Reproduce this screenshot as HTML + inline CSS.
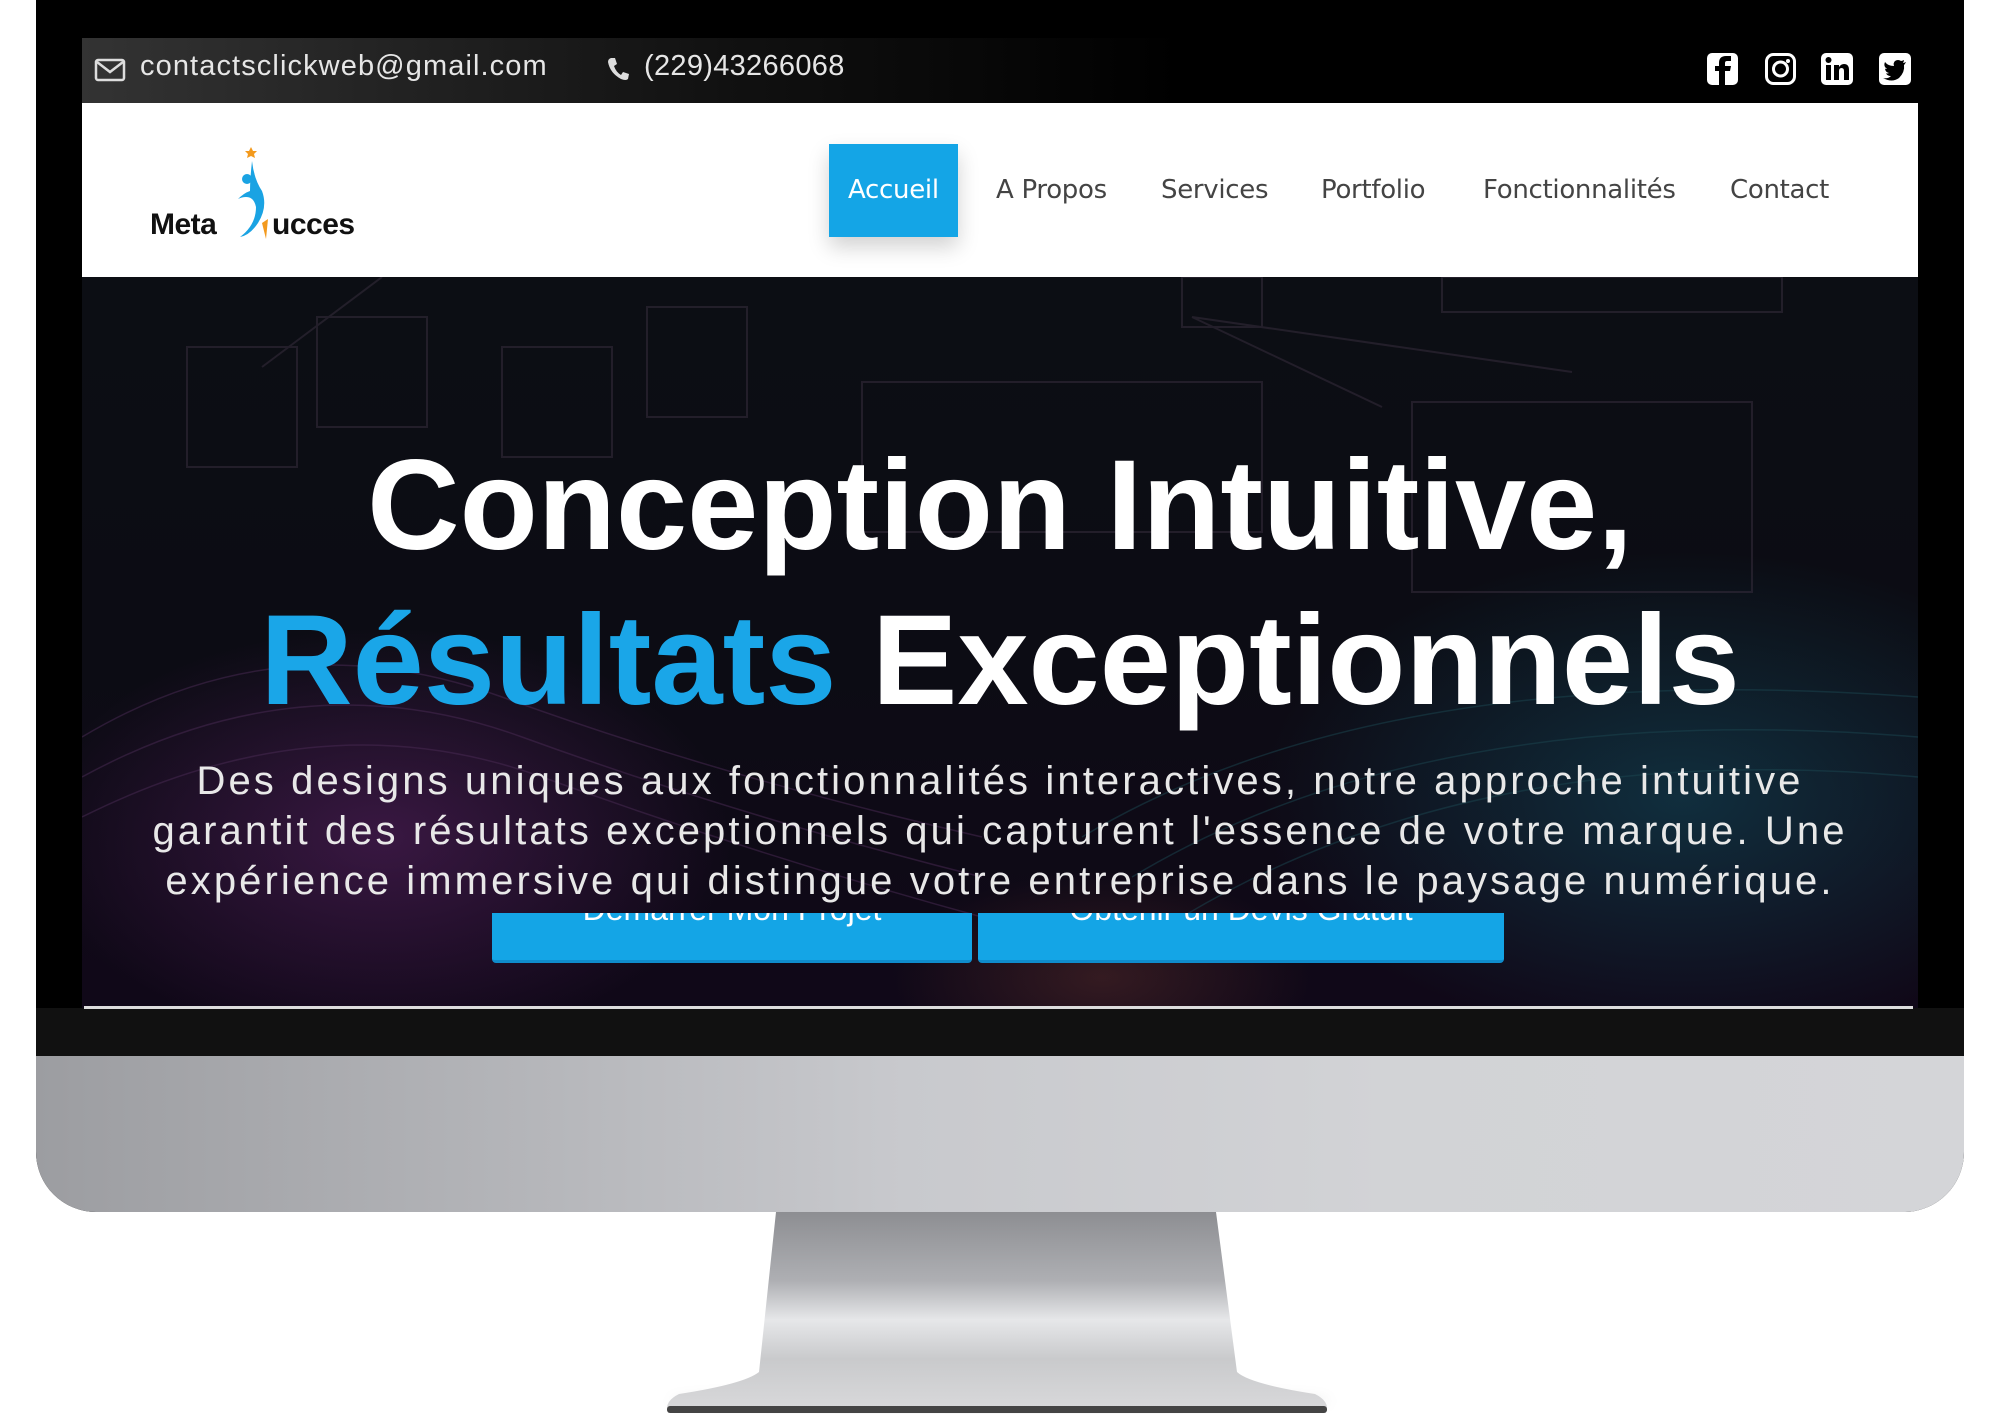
<!DOCTYPE html>
<html><head><meta charset="utf-8"><style>
*{margin:0;padding:0;box-sizing:border-box}
body{width:2000px;height:1414px;background:#fff;position:relative;overflow:hidden;font-family:"Liberation Sans",sans-serif}
.abs{position:absolute}
#body{left:36px;top:-60px;width:1928px;height:1272px;border-radius:60px;background:#000;overflow:hidden}
#chin{left:0;top:1116px;width:1928px;height:156px;background:linear-gradient(90deg,#9c9da1 0%,#b4b5b9 25%,#c8c9cd 45%,#d2d3d6 70%,#d4d5d8 100%)}
#bez{left:0;top:1068px;width:1928px;height:48px;background:#111}
#top{left:82px;top:38px;width:1836px;height:65px;background:linear-gradient(90deg,#333 0%,#111 35%,#000 60%,#000 100%);color:#e6e6e6;font-size:29px}
#nav{left:82px;top:103px;width:1836px;height:174px;background:#fff}
#hero{left:82px;top:277px;width:1836px;height:731px;overflow:hidden;background:
radial-gradient(ellipse 500px 300px at 300px 560px,rgba(110,40,120,.45),transparent 70%),
radial-gradient(ellipse 600px 350px at 1600px 520px,rgba(20,90,110,.45),transparent 70%),
radial-gradient(ellipse 300px 150px at 1020px 700px,rgba(120,60,50,.35),transparent 70%),
linear-gradient(180deg,#0c0e14 0%,#0c0c14 50%,#100818 100%)}
.nv{position:absolute;top:174px;font-size:26px;color:#444;font-family:"DejaVu Sans","Liberation Sans",sans-serif;transform:translateY(-50%);letter-spacing:-0.3px}
h1{position:absolute;width:2000px;left:0;text-align:center;color:#fff;font-weight:bold;font-size:128px;letter-spacing:0px;font-family:"Liberation Sans",sans-serif}
p.d{position:absolute;left:0;width:2000px;text-align:center;color:#e8e8e8;font-size:40px;line-height:50px;letter-spacing:3.1px}
.btn{position:absolute;top:913px;height:50px;background:#14a5e6;color:#fff;font-size:32px;text-align:center;overflow:hidden;border-radius:0 0 4px 4px;border-bottom:3px solid #0f8ccc}
.btn span{position:relative;top:-22px}
</style></head><body>
<div id="body" class="abs">
 <div id="bez" class="abs"></div>
 <div id="chin" class="abs"></div>
</div>
<div id="top" class="abs">
 <svg class="abs" style="left:12px;top:20px" width="32" height="24" viewBox="0 0 32 24"><rect x="2" y="2" width="28" height="20" rx="2" fill="none" stroke="#ddd" stroke-width="2.5"/><path d="M3 4 L16 14 L29 4" fill="none" stroke="#ddd" stroke-width="2.5"/></svg>
 <div class="abs" style="left:58px;top:12px;letter-spacing:1.1px">contactsclickweb@gmail.com</div>
 <svg class="abs" style="left:524px;top:18px" width="24" height="26" viewBox="0 0 24 26"><path d="M5 2 L9 2 L11 8 L8 10 Q10 16 15 19 L17 16 L23 18 L22 23 Q20 25 15 23 Q4 17 2 6 Q2 3 5 2Z" fill="#ddd"/></svg>
 <div class="abs" style="left:562px;top:12px;letter-spacing:0.3px">(229)43266068</div>
 <svg class="abs" style="left:1625px;top:15px" width="210" height="33" viewBox="0 0 210 33">
  <rect x="0" y="0" width="31" height="32" rx="5" fill="#fff"/><path d="M18 32 V18 H23 L24 13 H18 V10 Q18 8 20 8 H24 V3 H19 Q12 3 12 10 V13 H8 V18 H12 V32Z" fill="#000"/>
  <rect x="59.5" y="1.5" width="28" height="29" rx="7" fill="none" stroke="#fff" stroke-width="3"/><circle cx="73.5" cy="16" r="7" fill="none" stroke="#fff" stroke-width="3"/><circle cx="81" cy="8" r="2" fill="#fff"/>
  <rect x="114" y="0" width="32" height="32" rx="5" fill="#fff"/><rect x="119" y="12" width="5" height="15" fill="#000"/><circle cx="121.5" cy="7" r="3" fill="#000"/><path d="M127 12 H132 V14 Q134 11 137 11 Q142 11 142 17 V27 H137 V18 Q137 15 134.5 15 Q132 15 132 18 V27 H127Z" fill="#000"/>
  <rect x="172" y="0" width="32" height="32" rx="5" fill="#fff"/><path d="M199 9 Q197 10 196 10 Q197 8 197 7 Q195 8 194 8 Q191 6 188 8 Q186 10 187 13 Q181 13 178 9 Q176 13 180 16 Q178 16 178 15 Q178 19 182 20 Q180 21 179 20 Q180 23 184 23 Q181 26 176 25 Q185 30 192 25 Q198 19 197 12 Q198 11 199 9Z" fill="#000"/>
 </svg>
</div>
<div id="nav" class="abs">
 <div class="abs" style="left:68px;top:105px;font-size:30px;font-weight:bold;color:#111;letter-spacing:-0.5px">Meta</div>
 <svg class="abs" style="left:140px;top:40px" width="60" height="100" viewBox="0 0 60 100"><path d="M29 4 L31 8 L35 8 L32 11 L33 15 L29 13 L25 15 L26 11 L23 8 L27 8Z" fill="#f39a1e"/><circle cx="25" cy="36" r="5" fill="#1aa3e3"/><path d="M30 18 Q32 36 40 48 Q46 64 36 80 Q28 92 18 94 Q34 82 34 64 Q32 54 24 54 Q20 54 16 56 Q22 50 28 48 Q28 36 30 18Z" fill="#1aa3e3"/><path d="M40 80 L46 76 L44 96 Z" fill="#f39a1e"/></svg>
 <div class="abs" style="left:190px;top:105px;font-size:30px;font-weight:bold;color:#111;letter-spacing:-0.5px">ucces</div>
 <div class="abs" style="left:747px;top:41px;width:129px;height:93px;background:#14a5e6;box-shadow:0 10px 20px rgba(0,0,0,.18)"></div>
 <div class="nv" style="left:766px;top:87px;color:#fff">Accueil</div>
 <div class="nv" style="left:914px;top:87px">A Propos</div>
 <div class="nv" style="left:1079px;top:87px">Services</div>
 <div class="nv" style="left:1239px;top:87px">Portfolio</div>
 <div class="nv" style="left:1401px;top:87px">Fonctionnalités</div>
 <div class="nv" style="left:1648px;top:87px">Contact</div>
</div>
<div id="hero" class="abs">
 <svg width="1836" height="731" style="position:absolute;left:0;top:0;opacity:.5">
  <g fill="none" stroke="#3a3040" stroke-width="2">
   <rect x="105" y="70" width="110" height="120"/><rect x="235" y="40" width="110" height="110"/><rect x="420" y="70" width="110" height="110"/><rect x="565" y="30" width="100" height="110"/>
   <rect x="780" y="105" width="400" height="150"/><rect x="1330" y="125" width="340" height="190"/><rect x="1100" y="0" width="80" height="50"/><rect x="1360" y="0" width="340" height="35"/>
   <path d="M180 90 L300 0 M1110 40 L1490 95 M1110 40 L1300 130"/>
  </g>
  <g fill="none" stroke="#4a2b55" stroke-width="1.5"><path d="M0 460 Q200 340 420 420 T900 560"/><path d="M0 500 Q220 380 440 460 T900 600"/><path d="M0 540 Q240 420 460 500 T900 640"/></g>
  <g fill="none" stroke="#1b4650" stroke-width="1.5"><path d="M1000 560 Q1300 380 1836 420"/><path d="M1050 600 Q1350 420 1836 460"/><path d="M1100 640 Q1400 460 1836 500"/></g>
 </svg>
</div>
<h1 style="top:432px;left:0">Conception Intuitive,</h1>
<h1 style="top:587px"><span style="color:#1aa6e8">Résultats</span> Exceptionnels</h1>
<div class="btn" style="left:492px;width:480px"><span>Démarrer Mon Projet</span></div>
<div class="btn" style="left:978px;width:526px"><span>Obtenir un Devis Gratuit</span></div>
<p class="d" style="top:756px">Des designs uniques aux fonctionnalités interactives, notre approche intuitive<br>garantit des résultats exceptionnels qui capturent l'essence de votre marque. Une<br>expérience immersive qui distingue votre entreprise dans le paysage numérique.</p>
<div class="abs" style="left:84px;top:1006px;width:1829px;height:3px;background:#ddd"></div>
<div class="abs" style="left:670px;top:1390px;width:660px;height:22px;border-radius:50%;background:rgba(0,0,0,.08);filter:blur(6px)"></div>
<svg class="abs" style="left:660px;top:1212px" width="680" height="202" viewBox="0 0 680 202">
 <defs><linearGradient id="st" x1="0" y1="0" x2="0" y2="1"><stop offset="0" stop-color="#8d8e92"/><stop offset=".35" stop-color="#aeafb3"/><stop offset=".55" stop-color="#e6e7e9"/><stop offset=".75" stop-color="#c9cacc"/><stop offset="1" stop-color="#d8d8da"/></linearGradient></defs>
 <path d="M116 0 H556 L577 160 Q590 172 655 182 Q667 188 667 196 H7 Q7 188 19 182 Q84 172 99 160 Z" fill="url(#st)"/>
 <rect x="7" y="194" width="660" height="7" rx="3" fill="#444"/>
</svg>
</body></html>
